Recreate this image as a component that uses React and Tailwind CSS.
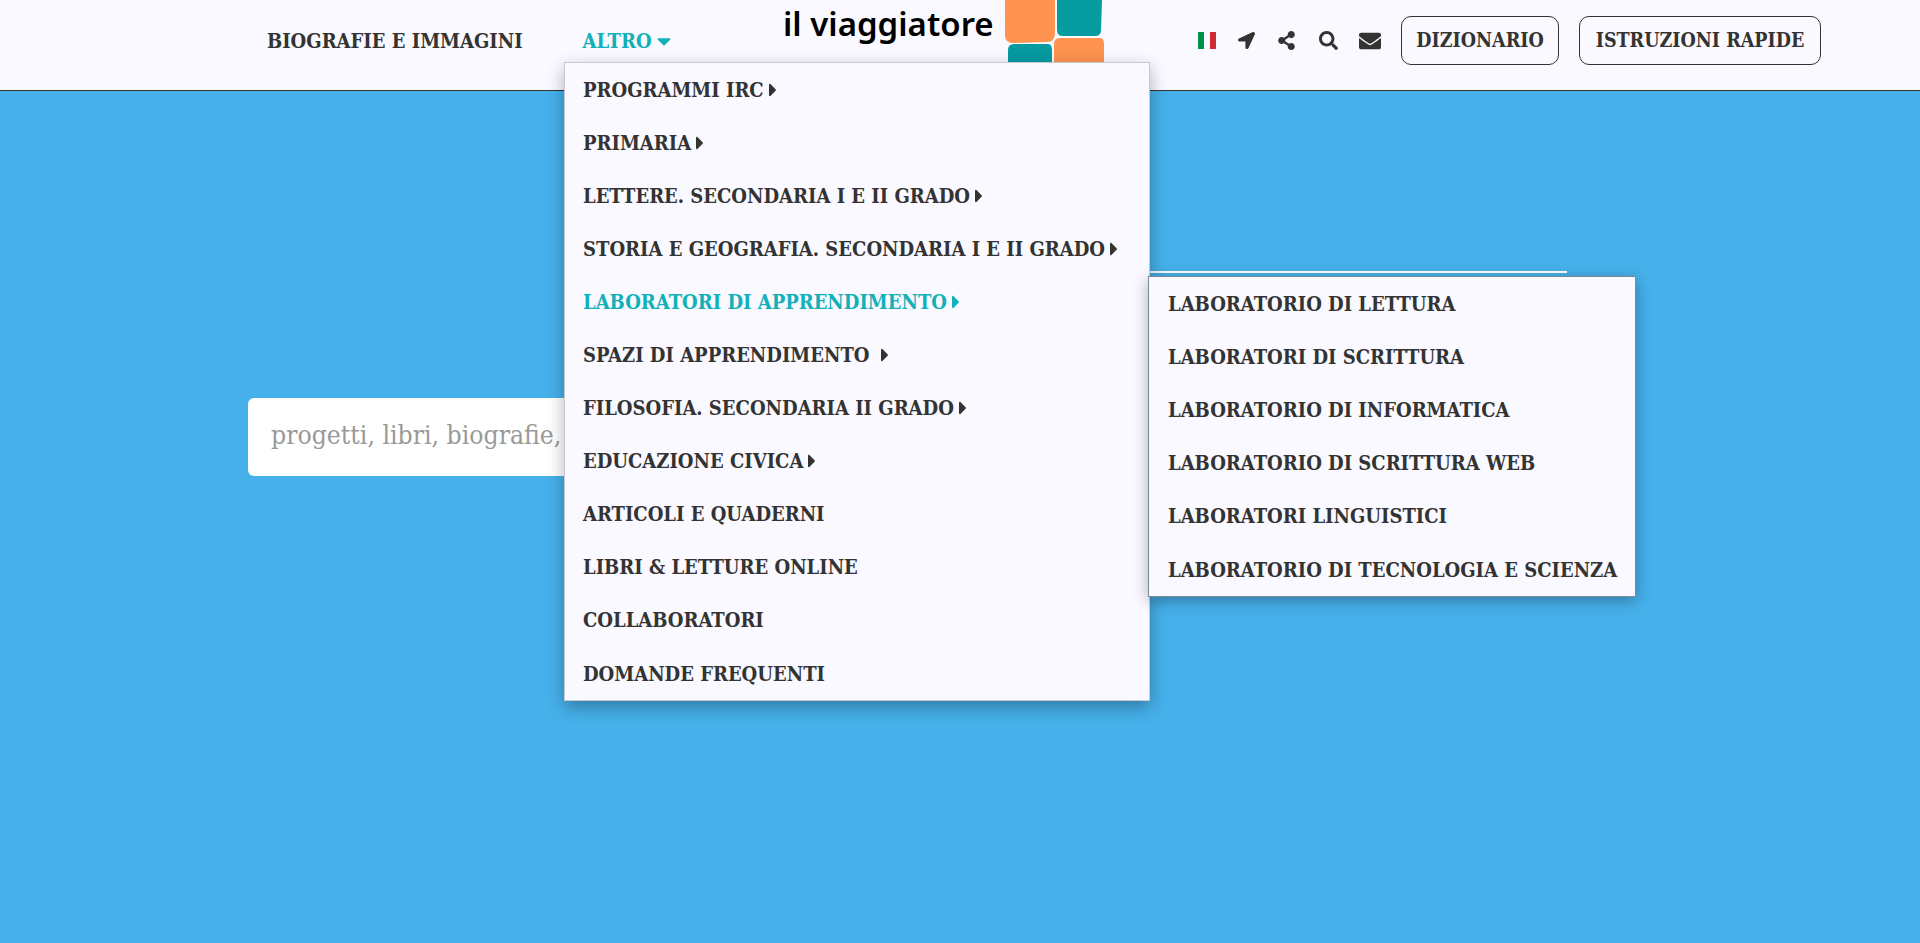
import React from "react";
import { FaCaretDown, FaCaretRight, FaLocationArrow, FaShareAlt, FaSearch, FaEnvelope } from "react-icons/fa";

const main = [
  ["PROGRAMMI IRC", true],
  ["PRIMARIA", true],
  ["LETTERE. SECONDARIA I E II GRADO", true],
  ["STORIA E GEOGRAFIA. SECONDARIA I E II GRADO", true],
  ["LABORATORI DI APPRENDIMENTO", true, true],
  ["SPAZI DI APPRENDIMENTO\u00a0", true],
  ["FILOSOFIA. SECONDARIA II GRADO", true],
  ["EDUCAZIONE CIVICA", true],
  ["ARTICOLI E QUADERNI"],
  ["LIBRI & LETTURE ONLINE"],
  ["COLLABORATORI"],
  ["DOMANDE FREQUENTI"],
];
const sub = ["LABORATORIO DI LETTURA", "LABORATORI DI SCRITTURA", "LABORATORIO DI INFORMATICA", "LABORATORIO DI SCRITTURA WEB", "LABORATORI LINGUISTICI", "LABORATORIO DI TECNOLOGIA E SCIENZA"];

export default function App() {
  return (
    <div className="font-['DejaVu_Serif_Condensed','DejaVu_Serif',serif] font-stretch-condensed relative h-[943px] overflow-hidden bg-[#46b0ea] text-[#333333] font-bold text-[20px]">
      <header className="h-[91px] bg-[#f9f9ff] border-b border-[#333333] flex items-center pl-[267px] pb-[9px] overflow-hidden relative">
        <span>BIOGRAFIE E IMMAGINI</span>
        <span className="ml-[60px] text-[#12b0b8] flex items-center gap-[5px]">ALTRO<FaCaretDown className="w-[14px] h-[22px]" /></span>
        <div className="absolute left-[783px] top-0 flex h-[90px]">
          <span className="font-['Noto_Sans','Inter',sans-serif] font-semibold text-[33px] text-black leading-[48px]">il viaggiatore</span>
        </div>
        <div className="ml-auto flex items-center pr-[99px]">
          <span className="flex w-[18px] h-[17px] mr-[22px]"><i className="flex-1 bg-[#009246]" /><i className="flex-1 bg-[#f9f9ff]" /><i className="flex-1 bg-[#ce2b37]" /></span>
          <FaLocationArrow className="w-[17px] h-[17px] mr-[22px]" />
          <FaShareAlt className="w-[19px] h-[19px] mr-[23px]" />
          <FaSearch className="w-[19px] h-[19px] mr-[21px]" />
          <FaEnvelope className="w-[22px] h-[22px] mr-[20px]" />
          <span className="h-[49px] w-[158px] border border-[#333333] rounded-[10px] flex items-center justify-center text-[19.5px]">DIZIONARIO</span>
          <span className="ml-[20px] h-[49px] w-[242px] border border-[#333333] rounded-[10px] flex items-center justify-center text-[19.5px]">ISTRUZIONI RAPIDE</span>
        </div>
      </header>

      <div className="absolute left-[1004px] top-0 w-[102px] h-[63px]">
        <svg width="102" height="63" viewBox="0 0 102 63">
          <path d="M1 0H51V33Q51 42 43 42L9 43Q1 43 1 35Z" fill="#ff9350" />
          <path d="M53 0H98L97 30Q97 36 91 36H59Q53 36 53 30Z" fill="#059ba1" />
          <path d="M4 50Q4 44 10 44H44Q48 44 48 50V63H4Z" fill="#059ba1" />
          <path d="M50 44Q50 38 56 38H96Q100 38 100 44V63H50Z" fill="#ff9350" />
        </svg>
      </div>

      <main className="pt-[307px] pl-[248px]">
        <div className="w-[1380px] h-[78px] bg-white rounded-[6px] flex items-center pl-[23px] pb-[2px] font-normal text-[#999999] text-[26.3px]">progetti, libri, biografie, …</div>
      </main>

      <div className="absolute left-[1148px] top-[271px] w-[419px] h-[2px] bg-white" />

      <nav className="absolute left-[564px] top-[62px] w-[586px] bg-[#f9f9ff] border border-[#c8c8d0] shadow-[0_6px_16px_rgba(0,0,0,0.3)]">
        {main.map(([t, arrow, active]) => (
          <div key={t} className={`h-[53.1px] pl-[18px] flex items-center whitespace-nowrap ${active ? "text-[#12b0b8]" : ""}`}>
            {t}{arrow && <FaCaretRight className="ml-[5px] w-[8px] h-[22px]" />}
          </div>
        ))}
      </nav>

      <nav className="absolute left-[1148px] top-[276px] w-[488px] bg-[#f9f9ff] border border-[#7a8a98] shadow-[0_4px_14px_rgba(0,0,0,0.3)]">
        {sub.map((t) => (
          <div key={t} className="h-[53.2px] pl-[19px] flex items-center whitespace-nowrap">{t}</div>
        ))}
      </nav>
    </div>
  );
}
